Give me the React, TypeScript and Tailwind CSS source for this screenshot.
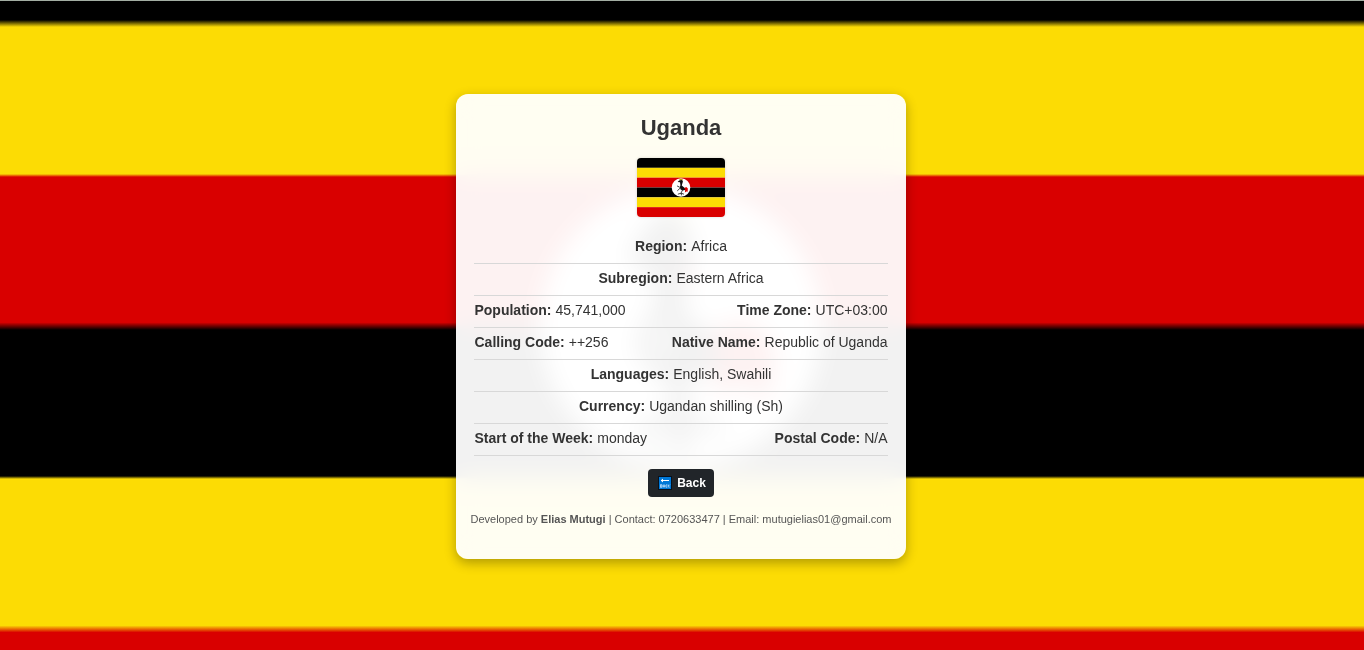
import type { ReactNode } from "react";

function Crane() {
  return (
    <g>
      <path d="M664 214 L676 200 L688 216 L686 240 L668 240 Z" fill="#fcdc04" />
      <path
        d="M628 262 L636 240 L650 222 L668 206 L684 222 L694 246 L692 262 L686 282 L684 312 L702 326 L722 336 L740 350 L728 366 L700 372 L686 390 L694 418 L720 420 L724 432 L688 430 L690 452 L674 454 L672 428 L640 436 L632 424 L668 412 L670 384 L650 372 L636 350 L640 326 L654 306 L656 286 L650 272 Z"
        fill="#000"
      />
      <path d="M658 320 L672 330 L666 360 L652 350 Z" fill="#9ca69c" />
      <path d="M684 262 L694 264 L692 284 L684 282 Z" fill="#d90000" />
      <path
        d="M710 338 L732 318 L760 326 L776 350 L770 396 L752 398 L746 376 L724 396 L710 380 L722 358 Z"
        fill="#d90000"
      />
      <path d="M636 426 L670 450 L662 462 L642 452 Z" fill="#9ca69c" />
    </g>
  );
}

function Backdrop() {
  return (
    <div className="absolute inset-0 -z-10 border-t border-[#a3aea3]" aria-hidden="true">
      <svg
        className="block h-full w-full"
        viewBox="0 -130 1364 909"
        preserveAspectRatio="xMidYMid slice"
      >
        <defs>
          <linearGradient id="stripes" gradientUnits="userSpaceOnUse" x1="0" y1="-129" x2="0" y2="780">
            <stop offset="0.1628" stopColor="#000" />
            <stop offset="0.1705" stopColor="#fcdc04" />
            <stop offset="0.3322" stopColor="#fcdc04" />
            <stop offset="0.3355" stopColor="#d90000" />
            <stop offset="0.4955" stopColor="#d90000" />
            <stop offset="0.5038" stopColor="#000" />
            <stop offset="0.6645" stopColor="#000" />
            <stop offset="0.6678" stopColor="#fcdc04" />
            <stop offset="0.8289" stopColor="#fcdc04" />
            <stop offset="0.8366" stopColor="#d90000" />
          </linearGradient>
        </defs>
        <rect x="0" y="-130" width="1364" height="911" fill="url(#stripes)" />
        <circle cx="681" cy="326" r="141" fill="#fff" />
        <Crane />
      </svg>
    </div>
  );
}

function Flag() {
  return (
    <svg
      className="h-[59px] w-[88px] rounded shadow-[0_0_3px_rgba(0,0,0,0.15)]"
      viewBox="0 0 90 60"
      preserveAspectRatio="none"
      role="img"
      aria-label="Flag of Uganda"
    >
      <rect width="90" height="10" fill="#000" />
      <rect y="10" width="90" height="10" fill="#fcdc04" />
      <rect y="20" width="90" height="10" fill="#d90000" />
      <rect y="30" width="90" height="10" fill="#000" />
      <rect y="40" width="90" height="10" fill="#fcdc04" />
      <rect y="50" width="90" height="10" fill="#d90000" />
      <circle cx="45" cy="30" r="9.5" fill="#fff" />
      <path d="M43.2 21.2 L46.4 21 L47 23 L43.8 23 Z" fill="#b89a10" />
      <path
        d="M41.6 24.4 L43 22.8 L46 22.4 L47 24 L46.2 26.4 L45.8 28 L47.6 29.4 L49.4 31 L49 32.6 L46.8 33 L44.6 32 L43.8 30 L44.4 27.6 L44 24.6 Z"
        fill="#111"
      />
      <path
        d="M44.2 30.6 L41.2 33.4 M41 28.4 L43.8 29.8 M46.6 32.4 L45.2 35.4 L45.4 38 M41.8 36.8 L45.2 35.8 L48 36.8"
        fill="none"
        stroke="#222"
        strokeWidth="0.9"
      />
      <path d="M48.4 30.6 L50.4 29.4 L52 31 L51.8 34.4 L50.4 34 L49 35 L49.2 32.6 Z" fill="#d90000" />
    </svg>
  );
}

function BackIcon() {
  return (
    <svg className="size-[14px]" viewBox="0 0 14 14" aria-hidden="true">
      <rect width="14" height="14" fill="#08111c" />
      <rect x="1" y="1" width="12" height="12" fill="#0078d7" />
      <path d="M3 4.5 H11 M5 3 L3.2 4.5 L5 6" fill="none" stroke="#fff" strokeWidth="1" />
      <path
        d="M2.5 8.5 V11.5 M2.5 8.7 H4 V11.3 H2.5 M2.5 10 H4 M5.2 11.5 V9 H6.8 V11.5 M5.2 10.4 H6.8 M9.2 8.9 H8 V11.2 H9.2 M10.2 8.5 V11.5 M11.8 8.6 L10.4 10 L11.8 11.4"
        fill="none"
        stroke="#d8ecff"
        strokeWidth="0.7"
      />
    </svg>
  );
}

function Field({ label, children }: { label: string; children: ReactNode }) {
  return (
    <div className="flex gap-1">
      <dt className="font-bold">{label}:</dt>
      <dd>{children}</dd>
    </div>
  );
}

const rows: [string, string][][] = [
  [["Region", "Africa"]],
  [["Subregion", "Eastern Africa"]],
  [["Population", "45,741,000"], ["Time Zone", "UTC+03:00"]],
  [["Calling Code", "++256"], ["Native Name", "Republic of Uganda"]],
  [["Languages", "English, Swahili"]],
  [["Currency", "Ugandan shilling (Sh)"]],
  [["Start of the Week", "monday"], ["Postal Code", "N/A"]],
];

export default function App() {
  return (
    <main className="relative isolate flex min-h-screen items-center justify-center overflow-hidden pt-[3px] pr-0.5 font-['Liberation_Sans',Arial,sans-serif] text-[#333]">
      <Backdrop />
      <article className="flex flex-col items-center rounded-xl bg-white/95 px-3.5 pt-[21px] pb-[33px] shadow-[0_4px_12px_rgba(0,0,0,0.3)] backdrop-blur-[12px]">
        <h1 className="text-[22px] leading-[26px] font-bold">Uganda</h1>
        <div className="mt-[17px] mb-[15px]">
          <Flag />
        </div>
        <dl className="w-full px-1 text-sm leading-[21px]">
          {rows.map((row) => (
            <div
              key={row[0][0]}
              className={`flex border-b border-[#d8d8d8] pt-1 pb-1.5 ${
                row.length > 1 ? "justify-between" : "justify-center"
              }`}
            >
              {row.map(([label, value]) => (
                <Field key={label} label={label}>
                  {value}
                </Field>
              ))}
            </div>
          ))}
        </dl>
        <button
          type="button"
          className="mt-[13px] flex h-7 items-center gap-[5px] rounded bg-[#212529] px-2.5 pr-2 text-xs font-bold text-white"
        >
          <BackIcon />
          Back
        </button>
        <footer className="mt-[15px] text-[11px] leading-[14px] whitespace-nowrap text-[#555]">
          Developed by <strong>Elias Mutugi</strong> | Contact: 0720633477 | Email: mutugielias01@gmail.com
        </footer>
      </article>
    </main>
  );
}
